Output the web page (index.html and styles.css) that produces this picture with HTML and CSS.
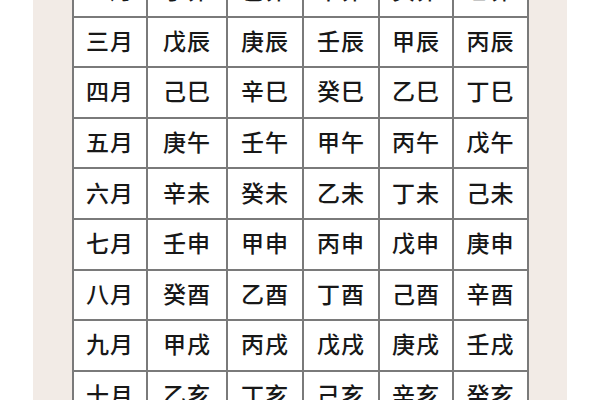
FILE: index.html
```html
<!DOCTYPE html>
<html lang="zh">
<head>
<meta charset="utf-8">
<link rel="stylesheet" href="styles.css">
</head>
<body>
<div class="panel">
  <div class="grid">
    <div class="c">二月</div><div class="c">丁卯</div><div class="c">己卯</div><div class="c">辛卯</div><div class="c">癸卯</div><div class="c">乙卯</div>
    <div class="c">三月</div><div class="c">戊辰</div><div class="c">庚辰</div><div class="c">壬辰</div><div class="c">甲辰</div><div class="c">丙辰</div>
    <div class="c">四月</div><div class="c">己巳</div><div class="c">辛巳</div><div class="c">癸巳</div><div class="c">乙巳</div><div class="c">丁巳</div>
    <div class="c">五月</div><div class="c">庚午</div><div class="c">壬午</div><div class="c">甲午</div><div class="c">丙午</div><div class="c">戊午</div>
    <div class="c">六月</div><div class="c">辛未</div><div class="c">癸未</div><div class="c">乙未</div><div class="c">丁未</div><div class="c">己未</div>
    <div class="c">七月</div><div class="c">壬申</div><div class="c">甲申</div><div class="c">丙申</div><div class="c">戊申</div><div class="c">庚申</div>
    <div class="c">八月</div><div class="c">癸酉</div><div class="c">乙酉</div><div class="c">丁酉</div><div class="c">己酉</div><div class="c">辛酉</div>
    <div class="c">九月</div><div class="c">甲戌</div><div class="c">丙戌</div><div class="c">戊戌</div><div class="c">庚戌</div><div class="c">壬戌</div>
    <div class="c">十月</div><div class="c">乙亥</div><div class="c">丁亥</div><div class="c">己亥</div><div class="c">辛亥</div><div class="c">癸亥</div>
  </div>
</div>
</body>
</html>
```
FILE: styles.css
```css
html, body {
  margin: 0;
  padding: 0;
  background: #ffffff;
  width: 600px;
  height: 400px;
  overflow: hidden;
}
.panel {
  margin-left: 33px;
  width: 534px;
  height: 400px;
  background: #f2ebe6;
  padding: 0 39px 0 39px;
  box-sizing: border-box;
  overflow: hidden;
}
.grid {
  display: grid;
  grid-template-columns: 74px 80px 76px 76px 74px 75px;
  grid-auto-rows: 50.6px;
  margin-top: -33px;
  border-left: 2px solid #7a7a7a;
  background: #ffffff;
  width: 457px;
  box-sizing: border-box;
}
.c {
  box-sizing: border-box;
  border-right: 2px solid #7a7a7a;
  border-bottom: 2px solid #7a7a7a;
  display: flex;
  align-items: center;
  justify-content: center;
  padding-bottom: 4px;
  font-family: "Noto Sans CJK SC", sans-serif;
  font-size: 23px;
  font-weight: 500;
  color: #181818;
  letter-spacing: 1px;
}
```
